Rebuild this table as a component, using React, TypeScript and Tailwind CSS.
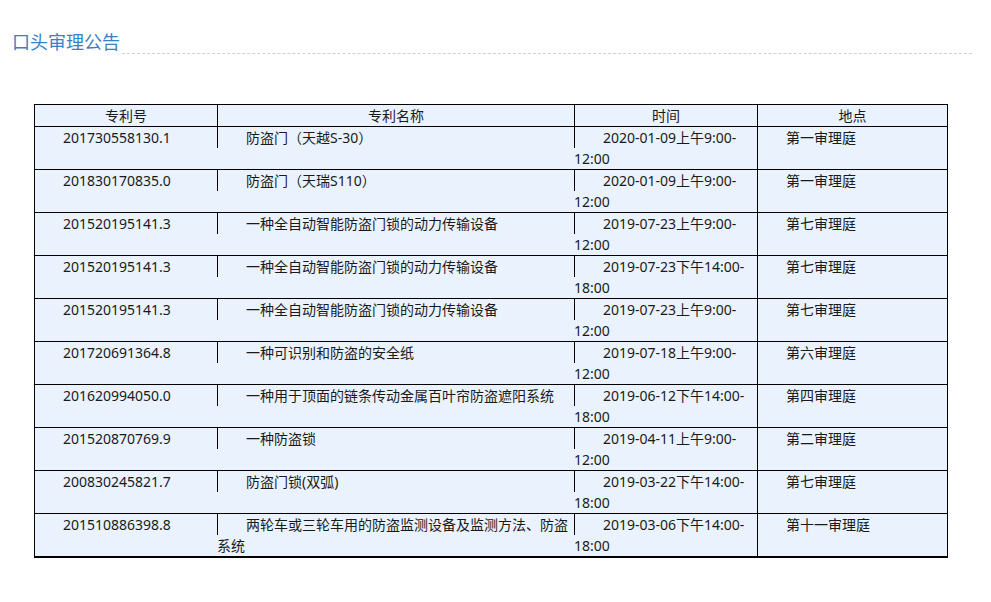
import React from "react";

const rows = [
  ["201730558130.1", "防盗门（天越S-30）", "2020-01-09上午9:00-12:00", "第一审理庭"],
  ["201830170835.0", "防盗门（天瑞S110）", "2020-01-09上午9:00-12:00", "第一审理庭"],
  ["201520195141.3", "一种全自动智能防盗门锁的动力传输设备", "2019-07-23上午9:00-12:00", "第七审理庭"],
  ["201520195141.3", "一种全自动智能防盗门锁的动力传输设备", "2019-07-23下午14:00-18:00", "第七审理庭"],
  ["201520195141.3", "一种全自动智能防盗门锁的动力传输设备", "2019-07-23上午9:00-12:00", "第七审理庭"],
  ["201720691364.8", "一种可识别和防盗的安全纸", "2019-07-18上午9:00-12:00", "第六审理庭"],
  ["201620994050.0", "一种用于顶面的链条传动金属百叶帘防盗遮阳系统", "2019-06-12下午14:00-18:00", "第四审理庭"],
  ["201520870769.9", "一种防盗锁", "2019-04-11上午9:00-12:00", "第二审理庭"],
  ["200830245821.7", "防盗门锁(双弧)", "2019-03-22下午14:00-18:00", "第七审理庭"],
  ["201510886398.8", "两轮车或三轮车用的防盗监测设备及监测方法、防盗系统", "2019-03-06下午14:00-18:00", "第十一审理庭"],
];

function Lead() {
  return <span className="inline-block w-[29px] h-[21px] border-l border-black align-top"></span>;
}

export default function App() {
  return (
    <div
      className="min-h-[602px] bg-white text-[14px] leading-[21px] text-[#1a1a1a]"
      style={{ fontFamily: '"Noto Sans", "Noto Sans CJK SC", sans-serif' }}
    >
      <div className="flex items-end pt-[30px] pl-[12px] pr-[19px]">
        <div className="text-[18px] leading-[24px] text-[#3a80c3] pr-[2px]">口头审理公告</div>
        <div className="flex-1 border-b border-dashed border-[#d0d0d0]"></div>
      </div>

      <div className="ml-[34px] mt-[50px] w-[914px] border-l border-r border-t border-b border-black bg-[#eaf2fd]">
        <div className="flex border-b border-black">
          <div className="w-[182px] text-center">专利号</div>
          <div className="w-[357px] text-center border-l border-black">专利名称</div>
          <div className="w-[183px] text-center border-l border-black">时间</div>
          <div className="w-[190px] text-center border-l border-black">地点</div>
        </div>
        {rows.map((r, i) => (
          <div key={i} className="flex border-b border-black">
            <div className="w-[182px] pl-[28px]">{r[0]}</div>
            <div className="w-[357px]">
              <Lead />
              {r[1]}
            </div>
            <div className="w-[183px]">
              <Lead />
              {r[2]}
            </div>
            <div className="w-[190px] border-l border-black pl-[28px]">{r[3]}</div>
          </div>
        ))}
      </div>
    </div>
  );
}
